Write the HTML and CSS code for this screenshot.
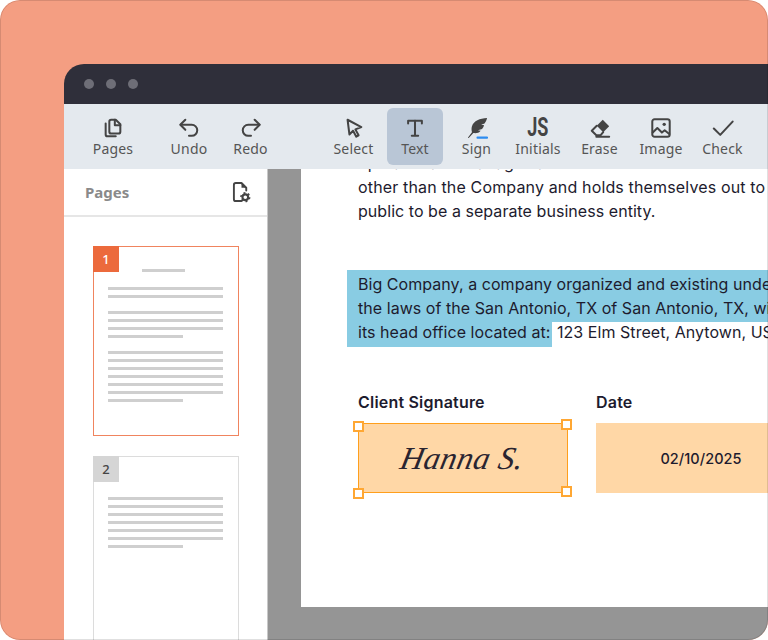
FILE: index.html
```html
<!DOCTYPE html>
<html lang="en">
<head>
  <meta charset="UTF-8">
  <meta name="viewport" content="width=device-width, initial-scale=1.0">
  <title>Document editor</title>
  <link rel="stylesheet" href="styles.css">
</head>
<body>
  <div class="frame">
    <div class="window">
      <div class="titlebar">
        <span class="dot"></span>
        <span class="dot"></span>
        <span class="dot"></span>
      </div>

      <div class="toolbar">
        <div class="tool tool-pages">
          <svg class="icon" viewBox="0 0 24 24"><path d="M10 3h5l5 5v8a2 2 0 0 1-2 2h-8a2 2 0 0 1-2-2V5a2 2 0 0 1 2-2z"/><path d="M14 3v6h6"/><path d="M4 7v12a2 2 0 0 0 2 2h9"/></svg>
          <span>Pages</span>
        </div>
        <div class="tool">
          <svg class="icon" viewBox="0 0 24 24"><path d="M8 14 2.500 8.500 8 3"/><path d="M3 8.500h12a6 6 0 0 1 0 12h-3"/></svg>
          <span>Undo</span>
        </div>
        <div class="tool tool-redo">
          <svg class="icon" viewBox="0 0 24 24"><path d="M16 14l5.500-5.500L16 3"/><path d="M21 8.500H9a6 6 0 0 0 0 12h3"/></svg>
          <span>Redo</span>
        </div>
        <div class="tool">
          <svg class="icon" viewBox="0 0 24 24"><path d="M5 3l15 8-6.500 2.500L17 20l-2.500 1.500-3.500-6.500-4 4z"/></svg>
          <span>Select</span>
        </div>
        <div class="tool active">
          <svg class="icon" viewBox="0 0 24 24"><path d="M4.500 7V4h15v3"/><path d="M12 4v16"/><path d="M8.500 20.500h7"/></svg>
          <span>Text</span>
        </div>
        <div class="tool">
          <svg class="icon" viewBox="0 0 24 24"><path class="fill" d="M23 1C15 1.500 8.500 4 6.500 10c-.7 2.200-.5 4.500 0 6.500L2 22.500l1 .5 5-5.500c3 .5 6 0 8-2.500l-3-.5 4.500-1.500c1-1 1.800-2.500 2.300-4l-3.300-.5 3.700-1.500C21.500 5.500 22.500 3 23 1z"/><path class="blue" d="M12.500 22.500H23"/></svg>
          <span>Sign</span>
        </div>
        <div class="tool">
          <span class="js-icon">JS</span>
          <span>Initials</span>
        </div>
        <div class="tool">
          <svg class="icon" viewBox="0 0 24 24"><path class="fill" d="M15 3l7 7-6.500 6.500-7-7z"/><path d="M8.500 9.500 3 15l5 5h4.500l3-3.500"/><path d="M8 21.500h14"/></svg>
          <span>Erase</span>
        </div>
        <div class="tool">
          <svg class="icon" viewBox="0 0 24 24"><rect x="2.500" y="2.500" width="19" height="19" rx="2.500"/><circle class="fill" cx="15.500" cy="8" r="1.800"/><path d="M3 17l5-5 5 5 3-2.500 5 4"/></svg>
          <span>Image</span>
        </div>
        <div class="tool">
          <svg class="icon" viewBox="0 0 24 24"><path d="M2 12.500l7 7L22.500 5"/></svg>
          <span>Check</span>
        </div>
      </div>

      <div class="workspace">
        <aside class="sidebar">
          <div class="sidebar-head">
            <span class="sidebar-title">Pages</span>
            <svg class="head-icon" viewBox="0 0 20 22">
              <path d="M10 20H4a2 2 0 0 1-2-2V3a2 2 0 0 1 2-2h6l5 5v3"/>
              <path class="fill" d="M10 1l5 5h-5z"/>
              <circle class="gear" cx="14" cy="16" r="3"/>
              <circle class="teeth" cx="14" cy="16" r="4.600"/>
            </svg>
          </div>
          <div class="thumbs">
            <div class="thumb current">
              <span class="badge">1</span>
              <div class="bar title"></div>
              <div class="bars">
                <div class="bar"></div>
                <div class="bar"></div>
              </div>
              <div class="bars">
                <div class="bar"></div>
                <div class="bar"></div>
                <div class="bar"></div>
                <div class="bar short"></div>
              </div>
              <div class="bars">
                <div class="bar"></div>
                <div class="bar"></div>
                <div class="bar"></div>
                <div class="bar"></div>
                <div class="bar"></div>
                <div class="bar"></div>
                <div class="bar short"></div>
              </div>
            </div>
            <div class="thumb second">
              <span class="badge">2</span>
              <div class="bars">
                <div class="bar"></div>
                <div class="bar"></div>
                <div class="bar"></div>
                <div class="bar"></div>
                <div class="bar"></div>
                <div class="bar"></div>
                <div class="bar short"></div>
              </div>
            </div>
          </div>
        </aside>

        <main class="canvas">
          <div class="page">
            <div class="para first">
              <div class="line">operates and manages a business</div>
              <div class="line wide">other than the Company and holds themselves out to</div>
              <div class="line">public to be a separate business entity.</div>
            </div>

            <div class="para selected">
              <div class="hl-block">
                <div class="line">Big Company, a company organized and existing under</div>
                <div class="line">the laws of the San Antonio, TX of San Antonio, TX, with</div>
              </div>
              <div class="line"><span class="hl-end">its head office located at:</span> 123 Elm Street, Anytown, USA</div>
            </div>

            <div class="fields">
              <div class="field">
                <div class="field-label">Client Signature</div>
                <div class="box sig-box">
                  <span class="signature">Hanna S.</span>
                  <span class="handle h-tl"></span>
                  <span class="handle h-tr"></span>
                  <span class="handle h-bl"></span>
                  <span class="handle h-br"></span>
                </div>
              </div>
              <div class="field">
                <div class="field-label">Date</div>
                <div class="box date-box">02/10/2025</div>
              </div>
            </div>
          </div>
        </main>
      </div>
    </div>
  </div>
</body>
</html>
```

FILE: styles.css
```css
html, body {
  margin: 0;
  padding: 0;
  background: white;
}
.frame {
  position: relative;
  width: 768px;
  height: 640px;
  box-sizing: border-box;
  padding: 64px 0 0 64px;
  background: #f49e82;
  border-radius: 20px;
  overflow: hidden;
}
.frame::after {
  content: "";
  position: absolute;
  inset: 0;
  border: 1px solid rgba(0,0,0,0.12);
  border-radius: 20px;
  pointer-events: none;
}
.window {
  height: 576px;
  display: flex;
  flex-direction: column;
  border-top-left-radius: 20px;
  overflow: hidden;
}

/* title bar */
.titlebar {
  height: 40px;
  flex: none;
  display: flex;
  align-items: center;
  gap: 12px;
  padding-left: 20px;
  background: #2f2f3a;
}
.dot {
  width: 10px;
  height: 10px;
  border-radius: 50%;
  background: #6e6e77;
}

/* toolbar */
.toolbar {
  height: 65px;
  flex: none;
  box-sizing: border-box;
  display: flex;
  gap: 5.5px;
  padding: 4px 0 4px 21px;
  background: #e4e9ee;
}
.tool {
  width: 56px;
  flex: none;
  display: flex;
  flex-direction: column;
  align-items: center;
  padding-top: 9px;
  box-sizing: border-box;
  border-radius: 6px;
  font-family: "Noto Sans", sans-serif;
  font-size: 14px;
  letter-spacing: 0.2px;
  line-height: 20px;
  color: #555;
  white-space: nowrap;
}
.tool-pages {
  margin-right: 14.5px;
}
.tool-redo {
  margin-right: 41.5px;
}
.tool.active {
  background: #b9c6d6;
}
.icon {
  width: 22px;
  height: 22px;
  fill: none;
  stroke: #444;
  stroke-width: 2.2;
  stroke-linecap: round;
  stroke-linejoin: round;
}
.icon .fill {
  fill: #444;
  stroke: none;
}
.icon .blue {
  stroke: #2d8cf0;
}
.js-icon {
  height: 22px;
  font-family: Roboto, sans-serif;
  font-size: 25px;
  line-height: 22px;
  font-weight: 700;
  color: #444;
  transform: scaleX(0.72);
}

/* left panel */
.workspace {
  flex: 1;
  min-height: 0;
  display: flex;
}
.sidebar {
  width: 204px;
  flex: none;
  box-sizing: border-box;
  background: white;
  border-right: 1px solid #c8c8c8;
  overflow: hidden;
}
.sidebar-head {
  height: 48px;
  box-sizing: border-box;
  display: flex;
  align-items: center;
  justify-content: space-between;
  padding: 0 16px 0 21px;
  border-bottom: 2px solid #e6e6e6;
}
.sidebar-title {
  font-family: "Noto Sans", sans-serif;
  font-size: 15px;
  font-weight: 700;
  color: #8a8a8a;
}
.head-icon {
  width: 19px;
  height: 21px;
  fill: none;
  stroke: #444;
  stroke-width: 2;
  stroke-linejoin: round;
  stroke-linecap: round;
}
.head-icon .fill {
  fill: #444;
  stroke: none;
}
.head-icon .gear {
  fill: white;
  stroke: #444;
  stroke-width: 2.2;
}
.head-icon .teeth {
  stroke-width: 1.6;
  stroke-linecap: butt;
  stroke-dasharray: 2 2.800;
}
.thumbs {
  display: flex;
  flex-direction: column;
  gap: 20px;
  padding: 29px 0 0 29px;
}
.thumb {
  position: relative;
  width: 146px;
  flex: none;
  box-sizing: border-box;
  border: 1px solid #dcdcdc;
  padding: 22px 15px 0 14px;
}
.thumb.current {
  height: 190px;
  border-color: #f0845e;
}
.thumb.second {
  height: 200px;
  padding-top: 40px;
}
.badge {
  position: absolute;
  top: -1px;
  left: -1px;
  width: 26px;
  height: 26px;
  display: flex;
  align-items: center;
  justify-content: center;
  background: #d5d5d5;
  color: #444;
  font-family: "Noto Sans", sans-serif;
  font-size: 13px;
  font-weight: 500;
}
.current .badge {
  background: #ec6a3c;
  color: white;
}
.bars {
  display: flex;
  flex-direction: column;
  gap: 5px;
  margin-bottom: 13px;
}
.bar {
  height: 3px;
  background: #cfcfcf;
}
.bar.short {
  width: 75px;
}
.bar.title {
  width: 43px;
  margin: 0 0 15px 34px;
}

/* document */
.canvas {
  flex: 1;
  min-width: 0;
  background: #959595;
  padding: 0 0 33px 33px;
}
.page {
  height: 100%;
  box-sizing: border-box;
  padding-left: 57px;
  background: white;
  overflow: hidden;
  font-family: Inter, sans-serif;
  font-size: 16px;
  letter-spacing: 0.05px;
  line-height: 24px;
  color: #1d1b2e;
}
.line {
  white-space: nowrap;
}
.line.wide {
  letter-spacing: 0.15px;
}
.para.first {
  margin-top: -18px;
}
.para.selected {
  margin: 47px 0 0 -11px;
}
.hl-block {
  padding: 2px 0 2px 11px;
  background: #89cce3;
}
.selected > .line {
  margin-top: -2px;
}
.hl-end {
  display: inline-block;
  padding: 0 2px 3px 11px;
  background: #89cce3;
}
.fields {
  display: flex;
  gap: 28px;
  margin-top: 43px;
}
.field {
  width: 210px;
  flex: none;
}
.field-label {
  font-weight: 600;
  letter-spacing: 0.2px;
  margin-bottom: 9px;
}
.box {
  position: relative;
  height: 70px;
  display: flex;
  align-items: center;
  justify-content: center;
  box-sizing: border-box;
  background: #ffd7a6;
  font-size: 14.5px;
  font-weight: 500;
}
.date-box {
  padding-top: 1px;
}
.sig-box {
  border: 1.5px solid #ff9f1c;
}
.signature {
  font-family: "Liberation Serif", serif;
  font-style: italic;
  font-size: 32px;
  font-weight: 400;
  letter-spacing: 0.5px;
  color: #2a2430;
  transform: skewX(-12deg);
}
.handle {
  position: absolute;
  width: 11px;
  height: 11px;
  box-sizing: border-box;
  background: white;
  border: 2px solid #ffa733;
}
.h-tl { left: -6px; top: -3px; }
.h-tr { right: -5px; top: -5px; }
.h-bl { left: -6px; bottom: -7px; }
.h-br { right: -5px; bottom: -5px; }
```
